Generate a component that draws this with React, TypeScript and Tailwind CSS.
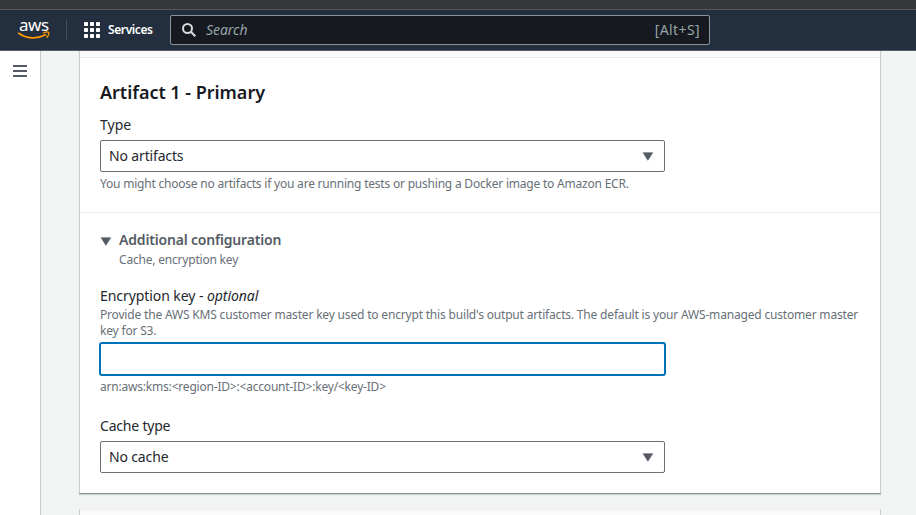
import type { ReactNode } from "react";

function Caret({ className = "" }: { className?: string }) {
  return (
    <svg className={className} width="11" height="9" viewBox="0 0 11 9" fill="#545b64">
      <path d="M1.1 0.7h9.6L5.9 8.3z" stroke="#545b64" strokeWidth="0.6" strokeLinejoin="round" />
    </svg>
  );
}

function AwsLogo() {
  return (
    <div className="relative h-[22px] w-8">
      <span className="absolute -top-[6px] left-px text-[17px] leading-[24px] font-normal tracking-[-0.5px] text-white">
        aws
      </span>
      <svg className="absolute top-[12px] left-0" width="32" height="10" viewBox="0 0 32 10" fill="none">
        <path d="M0.8 2.2C8.5 7.8 19 8.4 27.6 3.8" stroke="#ff9900" strokeWidth="1.7" strokeLinecap="round" />
        <path d="M25.4 2c2.2-.9 4.8-1 5.2-.5.5.7-.2 3-1.7 4.7" stroke="#ff9900" strokeWidth="1.3" strokeLinecap="round" />
      </svg>
    </div>
  );
}

function ServicesGrid() {
  const cells = [0, 6, 12];
  return (
    <svg width="16" height="16" viewBox="0 0 16 16" fill="#fff">
      {cells.map((y) => cells.map((x) => <rect key={`${x}-${y}`} x={x} y={y} width="4" height="4" rx="0.7" />))}
    </svg>
  );
}

function Select({ children }: { children: ReactNode }) {
  return (
    <button className="flex h-8 w-[565px] items-center justify-between rounded-xs border border-[#687078] pr-[11px] pl-2 text-left text-[14px] tracking-[-0.15px] text-[#24272d]">
      <span className="pb-px">{children}</span>
      <Caret />
    </button>
  );
}

export default function App() {
  return (
    <div className="flex h-[515px] w-[916px] flex-col overflow-hidden bg-[#f2f3f3] font-['Noto_Sans',sans-serif] text-[#24272d]">
      <div className="h-[10px] shrink-0 border-b border-[#58595c] bg-[#35363a]" />
      <header className="flex h-[41px] shrink-0 items-center border-b border-[#545b64] bg-[#232f3e] pl-[18px]">
        <AwsLogo />
        <div className="ml-4 h-[22px] w-px bg-[#414d5c]" />
        <div className="ml-[17px] flex items-center gap-2">
          <ServicesGrid />
          <span className="w-[62px] text-[12px] font-semibold tracking-[-0.4px] text-white">Services</span>
        </div>
        <div className="flex h-[30px] w-[540px] items-center rounded-xs border border-[#879596] bg-[#16191f] pr-[9px] pl-[11px] text-[14px] text-[#95a5a6]">
          <svg width="14" height="14" viewBox="0 0 14 14" fill="none" stroke="#d5dbdb" strokeWidth="2">
            <circle cx="5.5" cy="5.5" r="4.5" />
            <path d="M8.8 8.8l4.5 4.5" />
          </svg>
          <span className="ml-[10px] pb-0.5 tracking-[-0.05px] italic">Search</span>
          <span className="ml-auto pb-0.5 tracking-[0.4px]">[Alt+S]</span>
        </div>
      </header>
      <div className="flex min-h-0 flex-1">
        <aside className="w-[41px] shrink-0 border-r border-[#c5cccb] bg-white pt-[14px] pl-[13px]">
          <div className="flex w-[14px] flex-col gap-[3px]">
            <div className="h-[2px] bg-[#545b64]" />
            <div className="h-[2px] bg-[#545b64]" />
            <div className="h-[2px] bg-[#545b64]" />
          </div>
        </aside>
        <main className="ml-[38px] w-[802px] shrink-0">
          <section className="h-[443px] border-x border-b border-x-[#c9cfcf] border-b-[#879596] bg-white shadow-[0_1px_1px_rgba(0,28,36,0.15)]">
            <div className="h-[7px] border-b border-[#eaeded] bg-[#fafafa]" />
            <div className="h-[155px] border-b border-[#eaeded] px-5 pt-[23px]">
              <h2 className="text-[18px] leading-[22px] font-semibold tracking-[-0.02px] text-[#16191f]">Artifact 1 - Primary</h2>
              <div className="mt-[11px] mb-1 text-[14px] leading-[22px]">Type</div>
              <Select>No artifacts</Select>
              <p className="mt-1 text-[12px] leading-4 tracking-[-0.21px] text-[#687078]">
                You might choose no artifacts if you are running tests or pushing a Docker image to Amazon ECR.
              </p>
            </div>
            <div className="px-5 pt-4">
              <div className="flex text-[#545b64]">
                <Caret className="mt-2 mr-2" />
                <div>
                  <h3 className="text-[14px] leading-[22px] font-semibold tracking-[-0.18px]">Additional configuration</h3>
                  <p className="mt-px text-[12px] leading-4 tracking-[-0.2px] text-[#687078]">Cache, encryption key</p>
                </div>
              </div>
              <div className="mt-[17px] text-[14px] leading-[22px] tracking-[-0.07px]">
                <span>Encryption key - </span>
                <i>optional</i>
              </div>
              <p className="text-[12px] leading-4 tracking-[-0.18px] whitespace-nowrap text-[#687078]">
                <span>Provide the AWS KMS customer master key used to encrypt this build's output artifacts. The default is your AWS-managed customer master</span>
                <br />
                <span>key for S3.</span>
              </p>
              <div className="mt-[3px] -ml-px h-[34px] w-[567px] rounded-[3px] border-2 border-[#0073bb]" />
              <p className="mt-[3px] text-[12px] leading-4 tracking-[-0.2px] text-[#687078]">{"arn:aws:kms:<region-ID>:<account-ID>:key/<key-ID>"}</p>
              <div className="mt-5 mb-1 text-[14px] leading-[22px] tracking-[-0.2px]">Cache type</div>
              <Select>No cache</Select>
            </div>
          </section>
          <section className="mt-[15px] h-10 border border-[#c9cfcf] border-t-[#eaeded] bg-[#fafafa]" />
        </main>
      </div>
    </div>
  );
}
